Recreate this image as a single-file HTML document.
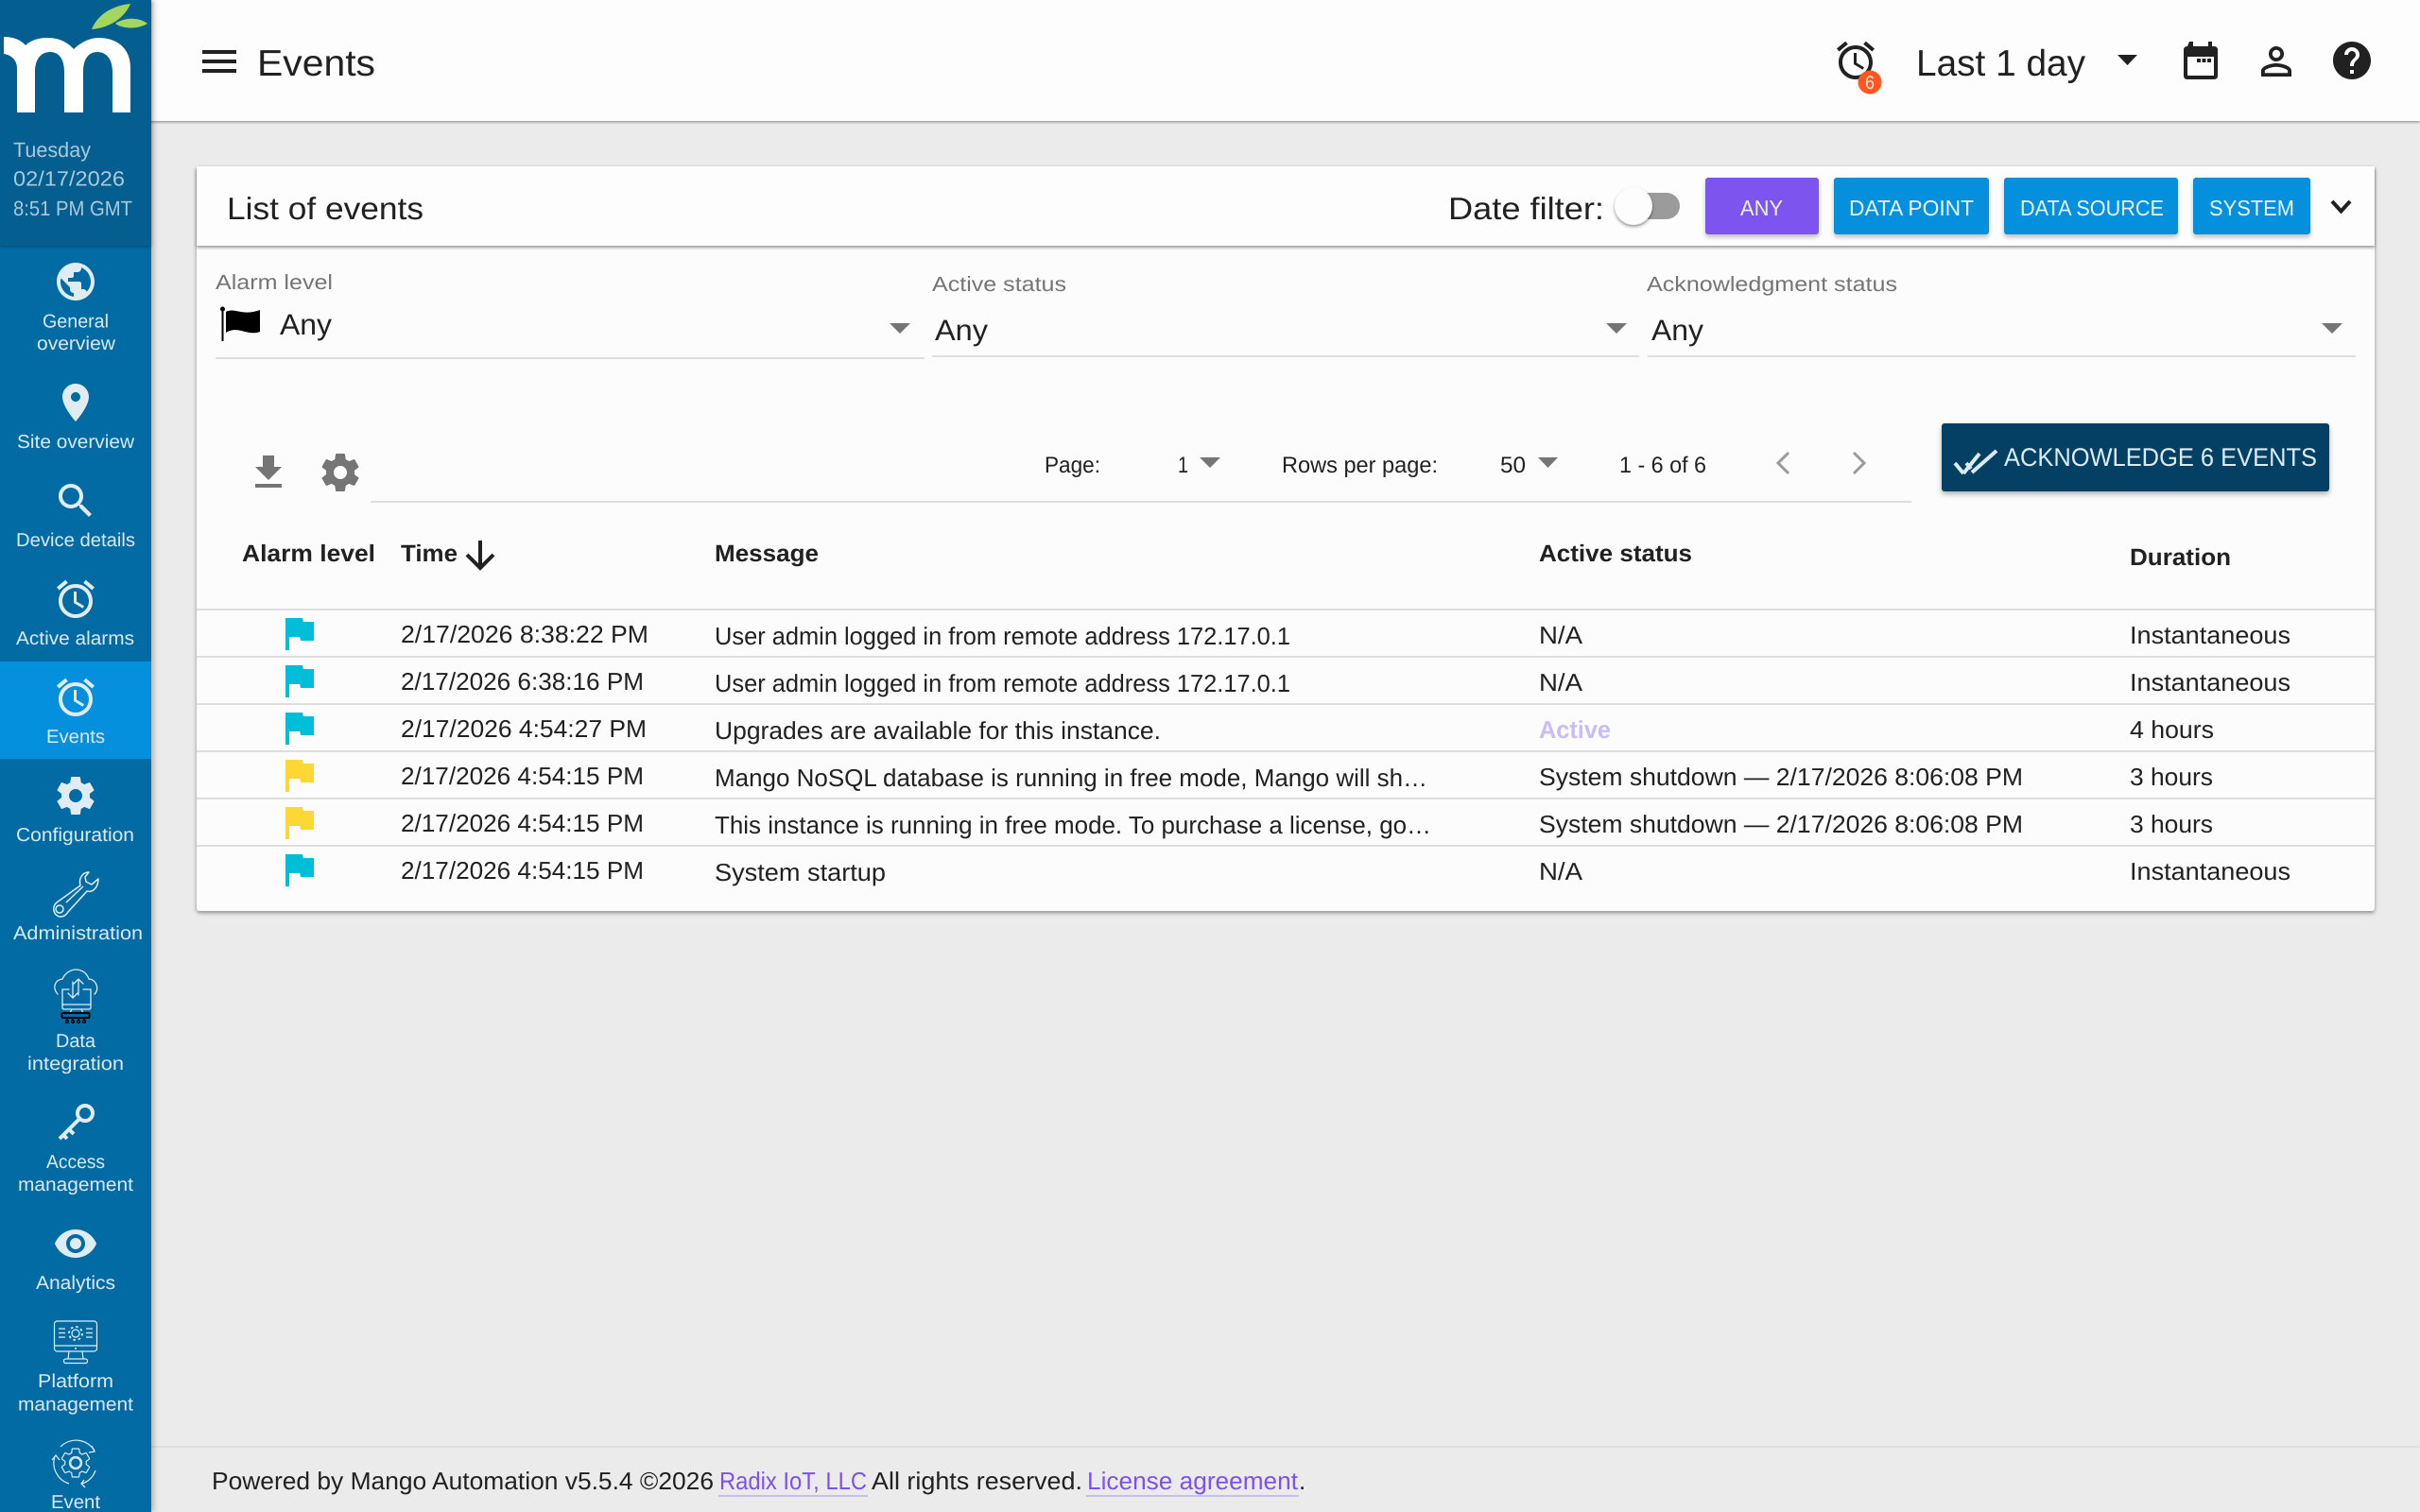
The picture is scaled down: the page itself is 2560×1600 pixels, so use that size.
<!DOCTYPE html>
<html><head><meta charset="utf-8"><title>Events</title>
<style>
html,body{margin:0;padding:0;width:2560px;height:1600px;overflow:hidden;background:#ebebeb;font-family:"Liberation Sans",sans-serif}
.a{position:absolute;box-sizing:border-box}
svg{position:absolute;left:0;top:0}
text{font-family:"Liberation Sans",sans-serif;fill:#212121;text-rendering:geometricPrecision}
.n{fill:#d9e8f2;font-size:20px}
.d{fill:#a9c9dc;font-size:22px}
.r{font-size:26px}
.b{font-size:25px;font-weight:bold}
.p{font-size:24px}
.l{font-size:22px;fill:#757575}
.w{font-size:23px;fill:#e8f4fb}
.i{fill:#e0ecf4}
.o{fill:none;stroke:#e0ecf4}
</style></head><body>
<div class="a" style="left:0;top:0;width:2560px;height:128px;background:#fdfdfd;box-shadow:0 1px 3px rgba(0,0,0,.45)"></div>
<div class="a" style="left:0;top:1530px;width:2560px;height:2px;background:#dedede"></div>
<div class="a" style="left:208px;top:176px;width:2304px;height:788px;background:#fcfcfc;border-radius:3px;box-shadow:0 2px 4px rgba(0,0,0,.4)"></div>
<div class="a" style="left:208px;top:176px;width:2304px;height:84px;background:#fdfdfd;box-shadow:0 2px 3px rgba(0,0,0,.4)"></div>
<div class="a" style="left:1804px;top:188px;width:120px;height:60px;background:#7d54ed;border-radius:3px;box-shadow:0 3px 5px rgba(0,0,0,.25)"></div>
<div class="a" style="left:1940px;top:188px;width:164px;height:60px;background:#0590dd;border-radius:3px;box-shadow:0 3px 5px rgba(0,0,0,.25)"></div>
<div class="a" style="left:2120px;top:188px;width:184px;height:60px;background:#0590dd;border-radius:3px;box-shadow:0 3px 5px rgba(0,0,0,.25)"></div>
<div class="a" style="left:2320px;top:188px;width:124px;height:60px;background:#0590dd;border-radius:3px;box-shadow:0 3px 5px rgba(0,0,0,.25)"></div>
<div class="a" style="left:2054px;top:448px;width:410px;height:72px;background:#034064;border-radius:3px;box-shadow:0 3px 6px rgba(0,0,0,.3)"></div>
<div class="a" style="left:1720px;top:204px;width:57px;height:28px;background:#9b9b9b;border-radius:14px"></div>
<div class="a" style="left:1708px;top:198px;width:40px;height:40px;background:#fdfdfd;border-radius:50%;box-shadow:0 2px 3px rgba(0,0,0,.4)"></div>
<div class="a" style="left:0;top:0;width:160px;height:1600px;background:#036ba3;box-shadow:3px 0 5px rgba(0,0,0,.22)"></div>
<div class="a" style="left:0;top:0;width:160px;height:260px;background:#045e90;box-shadow:0 1px 3px rgba(0,0,0,.3)"></div>
<div class="a" style="left:0;top:700px;width:160px;height:103px;background:#0590dd"></div>

<svg width="2560" height="1600" viewBox="0 0 2560 1600" xmlns="http://www.w3.org/2000/svg">
<defs>
<path id="alarm" d="M22 5.72l-4.6-3.86-1.29 1.53 4.6 3.86L22 5.72zM7.88 3.39L6.6 1.86 2 5.71l1.29 1.53 4.59-3.85zM12.5 8H11v6l4.75 2.85.75-1.23-4-2.37V8zM12 4c-4.97 0-9 4.03-9 9s4.03 9 9 9 9-4.03 9-9-4.03-9-9-9zm0 16c-3.87 0-7-3.13-7-7s3.13-7 7-7 7 3.13 7 7-3.13 7-7 7z"/>
<path id="gear" d="M19.43 12.98c.04-.32.07-.64.07-.98s-.03-.66-.07-.98l2.11-1.65c.19-.15.24-.42.12-.64l-2-3.46c-.12-.22-.39-.3-.61-.22l-2.49 1c-.52-.4-1.08-.73-1.69-.98l-.38-2.65C14.46 2.18 14.25 2 14 2h-4c-.25 0-.46.18-.49.42l-.38 2.65c-.61.25-1.17.59-1.69.98l-2.49-1c-.23-.09-.49 0-.61.22l-2 3.46c-.13.22-.07.49.12.64l2.11 1.65c-.04.32-.07.65-.07.98s.03.66.07.98l-2.11 1.65c-.19.15-.24.42-.12.64l2 3.46c.12.22.39.3.61.22l2.49-1c.52.4 1.08.73 1.69.98l.38 2.65c.03.24.24.42.49.42h4c.25 0 .46-.18.49-.42l.38-2.65c.61-.25 1.17-.59 1.69-.98l2.49 1c.23.09.49 0 .61-.22l2-3.46c.12-.22.07-.49-.12-.64l-2.11-1.65zM12 15.5c-1.93 0-3.5-1.57-3.5-3.5s1.57-3.5 3.5-3.5 3.5 1.57 3.5 3.5-1.57 3.5-3.5 3.5z"/>
<path id="flag" d="M14.4 6L14 4H5v17h2v-7h5.6l.4 2h7V6z"/>
</defs>

<!-- logo -->
<path fill="#fff" d="M4 39C14 39 22 42 27 48C33 42 42 40 50 40C60 40 70 43 78 52C86 44 96 40 104 40C125 40 138 52 138 72L138 119L119 119L119 76C119 62 112 55 103 55C94 55 88 62 88 76L88 119L68 119L68 76C68 62 62 55 53 55C44 55 37 62 37 76L37 119L18 119L18 72C18 64 12 58 4 57Z"/>
<path fill="#a4d65e" d="M97 31C103 16 118 6 138 4C132 18 118 29 97 31Z"/>
<path fill="#a4d65e" d="M122 25C130 19 146 17 156 25C146 31 130 31 122 25Z"/>

<text class="d" x="14" y="166" textLength="82" lengthAdjust="spacingAndGlyphs">Tuesday</text>
<text class="d" x="14" y="196.500" textLength="118" lengthAdjust="spacingAndGlyphs">02/17/2026</text>
<text class="d" x="14" y="228" textLength="126" lengthAdjust="spacingAndGlyphs">8:51 PM GMT</text>

<!-- nav icons -->
<path class="i" transform="translate(56 274) scale(2)" d="M12 2C6.48 2 2 6.48 2 12s4.48 10 10 10 10-4.48 10-10S17.52 2 12 2zm-1 17.93c-3.95-.49-7-3.85-7-7.93 0-.62.08-1.21.21-1.79L9 15v1c0 1.1.9 2 2 2v1.93zm6.9-2.54c-.26-.81-1-1.39-1.9-1.39h-1v-3c0-.55-.45-1-1-1H8v-2h2c.55 0 1-.45 1-1V7h2c1.1 0 2-.9 2-2v-.41c2.93 1.19 5 4.06 5 7.41 0 2.08-.8 3.97-2.1 5.39z"/>
<path class="i" transform="translate(56 402) scale(2)" d="M12 2C8.13 2 5 5.13 5 9c0 5.25 7 13 7 13s7-7.75 7-13c0-3.87-3.13-7-7-7zm0 9.5c-1.38 0-2.5-1.12-2.5-2.5s1.12-2.5 2.5-2.5 2.5 1.12 2.5 2.5-1.12 2.5-2.5 2.5z"/>
<path class="i" transform="translate(56 506) scale(2)" d="M15.5 14h-.79l-.28-.27C15.41 12.59 16 11.11 16 9.5 16 5.91 13.09 3 9.5 3S3 5.91 3 9.5 5.91 16 9.5 16c1.61 0 3.09-.59 4.23-1.57l.27.28v.79l5 4.99L20.49 19l-4.99-5zm-6 0C7.01 14 5 11.99 5 9.5S7.01 5 9.5 5 14 7.01 14 9.5 11.99 14 9.5 14z"/>
<use href="#alarm" class="i" transform="translate(56 610) scale(2)"/>
<use href="#alarm" class="i" transform="translate(56 714) scale(2)"/>
<use href="#gear" class="i" transform="translate(56 818) scale(2)"/>

<!-- wrench -->
<g class="o" stroke-width="1.500" stroke-linejoin="round">
<path d="M94 923C87 923 83 930 85 937L60 955C54 960 57 970 64 970C68 970 70 968 72 965L92 943C99 945 104 938 104 930L97 936L91 933L90 928Z"/>
<circle cx="63" cy="962" r="4"/>
<path d="M70 955L88 938"/>
</g>
<!-- data integration -->
<g class="o" stroke-width="1.300" stroke-linecap="round">
<path d="M61 1052C55 1045 58 1037 66 1036C69 1029 76 1026 80 1026C87 1026 92 1030 94 1036C101 1036 106 1046 100 1052"/>
<path d="M73 1047H66V1066Q66 1068 68 1068H94Q96 1068 96 1066V1047H88"/>
<path d="M66 1063H96M76 1068L74 1072M86 1068L88 1072"/>
<path d="M77 1039V1056M72 1051L77 1056L82 1051M83 1053V1036M78 1041L83 1036L88 1041"/>
</g>
<g fill="none" stroke="#000" stroke-width="1.300">
<rect x="65.500" y="1072" width="29" height="5" rx="1" stroke-width="2"/>
<circle cx="71" cy="1081" r="1.500"/><circle cx="77" cy="1081" r="1.500"/><circle cx="83" cy="1081" r="1.500"/><circle cx="89" cy="1081" r="1.500"/>
<path d="M71 1077V1079M77 1077V1079M83 1077V1079M89 1077V1079"/>
</g>
<!-- key -->
<g class="o">
<circle cx="90" cy="1178" r="8" stroke-width="4"/>
<path d="M84 1184L63 1205" stroke-width="4"/>
<path d="M73 1195L78 1200M67 1201L71 1205" stroke-width="4"/>
</g>
<!-- eye -->
<path class="i" transform="translate(56 1292) scale(2)" d="M12 4.5C7 4.5 2.73 7.61 1 12c1.73 4.39 6 7.5 11 7.5s9.27-3.11 11-7.5c-1.73-4.39-6-7.5-11-7.5zM12 17c-2.76 0-5-2.24-5-5s2.24-5 5-5 5 2.24 5 5-2.24 5-5 5zm0-8c-1.66 0-3 1.34-3 3s1.34 3 3 3 3-1.34 3-3-1.34-3-3-3z"/>
<!-- platform -->
<g class="o" stroke-width="1.200">
<rect x="57.500" y="1398" width="45" height="32" rx="3"/>
<path d="M58 1424H102M73 1430L72 1438M87 1430L88 1438"/>
<rect x="67.500" y="1438" width="25" height="4.500" rx="2"/>
<path d="M62 1406H69M62 1410.500H69M62 1415H69M91 1406H98M91 1410.500H98M91 1415H98"/>
<circle cx="80" cy="1411" r="4"/>
<circle cx="80" cy="1411" r="7" stroke-width="1.800" stroke-dasharray="2.500 3"/>
</g>
<circle class="i" cx="80" cy="1427" r="1"/>
<!-- event -->
<g class="o" stroke-width="1.200">
<path d="M64 1531A23 23 0 0 1 100 1535M101 1556A23 23 0 0 1 87 1570M73 1570A23 23 0 0 1 58 1541"/>
<path d="M97 1530L100 1536L94 1537M89 1566L86 1570L90 1574M55 1545L59 1540L63 1545" stroke-width="1.300"/>
<circle cx="80" cy="1548" r="6.500" stroke-width="1.300"/>
<use href="#gear" fill="none" stroke-width=".8" transform="translate(62 1530) scale(1.500)"/>
</g>

<!-- nav text -->
<g text-anchor="start">
<text class="n" x="45" y="346.500" textLength="70" lengthAdjust="spacingAndGlyphs">General</text>
<text class="n" x="39" y="370" textLength="83" lengthAdjust="spacingAndGlyphs">overview</text>
<text class="n" x="18" y="474" textLength="124" lengthAdjust="spacingAndGlyphs">Site overview</text>
<text class="n" x="17" y="578" textLength="126" lengthAdjust="spacingAndGlyphs">Device details</text>
<text class="n" x="17" y="682" textLength="125" lengthAdjust="spacingAndGlyphs">Active alarms</text>
<text class="n" x="49" y="786" textLength="62" lengthAdjust="spacingAndGlyphs">Events</text>
<text class="n" x="17" y="890" textLength="125" lengthAdjust="spacingAndGlyphs">Configuration</text>
<text class="n" x="14" y="994" textLength="137" lengthAdjust="spacingAndGlyphs">Administration</text>
<text class="n" x="59" y="1108" textLength="42" lengthAdjust="spacingAndGlyphs">Data</text>
<text class="n" x="29" y="1132" textLength="102" lengthAdjust="spacingAndGlyphs">integration</text>
<text class="n" x="49" y="1236" textLength="62" lengthAdjust="spacingAndGlyphs">Access</text>
<text class="n" x="19" y="1260" textLength="122" lengthAdjust="spacingAndGlyphs">management</text>
<text class="n" x="38" y="1364" textLength="84" lengthAdjust="spacingAndGlyphs">Analytics</text>
<text class="n" x="40" y="1468" textLength="80" lengthAdjust="spacingAndGlyphs">Platform</text>
<text class="n" x="19" y="1492.500" textLength="122" lengthAdjust="spacingAndGlyphs">management</text>
<text class="n" x="54" y="1596" textLength="52" lengthAdjust="spacingAndGlyphs">Event</text>
</g>

<!-- header -->
<path fill="#212121" d="M214 53h36v4h-36zM214 63h36v4h-36zM214 73h36v4h-36z"/>
<text x="272" y="80" font-size="39" textLength="125" lengthAdjust="spacingAndGlyphs">Events</text>
<use href="#alarm" fill="#212121" transform="translate(1939 40) scale(2)"/>
<circle cx="1978" cy="87" r="12.500" fill="#ff5722"/>
<text x="1973" y="94" font-size="20" textLength="10" lengthAdjust="spacingAndGlyphs" style="fill:#ffe0d4">6</text>
<text x="2027" y="80" font-size="39" textLength="179" lengthAdjust="spacingAndGlyphs">Last 1 day</text>
<path fill="#212121" d="M2240 58h21l-10.500 11z"/>
<path fill="#212121" fill-rule="evenodd" d="M2316 44h4v5h16v-5h4v5h2q4 0 4 4v27q0 4-4 4h-28q-4 0-4-4V53q0-4 4-4zM2314 60v20h28V60z"/>
<path fill="#212121" d="M2324 62h4v4h-4zM2329.500 62h4v4h-4zM2335 62h4v4h-4z"/>
<path fill="#212121" transform="translate(2384 41) scale(2)" d="M12 5.900c1.160 0 2.100.94 2.100 2.100s-.94 2.100-2.100 2.100S9.900 9.160 9.900 8s.94-2.100 2.100-2.100m0 9c2.970 0 6.100 1.460 6.100 2.100v1.100H5.900V17c0-.64 3.130-2.100 6.100-2.100M12 4C9.790 4 8 5.790 8 8s1.790 4 4 4 4-1.790 4-4-1.790-4-4-4zm0 9c-2.670 0-8 1.340-8 4v3h16v-3c0-2.660-5.330-4-8-4z"/>
<path fill="#212121" transform="translate(2464 40) scale(2)" d="M12 2C6.480 2 2 6.480 2 12s4.480 10 10 10 10-4.480 10-10S17.520 2 12 2zm1 17h-2v-2h2v2zm2.070-7.750l-.9.920C13.450 12.900 13 13.500 13 15h-2v-.5c0-1.100.45-2.100 1.170-2.830l1.240-1.260c.37-.36.59-.86.59-1.410 0-1.100-.9-2-2-2s-2 .9-2 2H8c0-2.210 1.790-4 4-4s4 1.790 4 4c0 .88-.36 1.680-.93 2.250z"/>

<!-- card header -->
<text x="240" y="232" font-size="33" textLength="208" lengthAdjust="spacingAndGlyphs">List of events</text>
<text x="1532" y="232" font-size="33" textLength="165" lengthAdjust="spacingAndGlyphs">Date filter:</text>
<text class="w" x="1841" y="228" textLength="45" lengthAdjust="spacingAndGlyphs">ANY</text>
<text class="w" x="1956" y="228" textLength="132" lengthAdjust="spacingAndGlyphs">DATA POINT</text>
<text class="w" x="2137" y="228" textLength="152" lengthAdjust="spacingAndGlyphs">DATA SOURCE</text>
<text class="w" x="2337" y="228" textLength="90" lengthAdjust="spacingAndGlyphs">SYSTEM</text>
<path d="M2467 213L2476.500 223.500L2486 213" fill="none" stroke="#212121" stroke-width="4"/>

<!-- filters -->
<text class="l" x="228" y="306" textLength="124" lengthAdjust="spacingAndGlyphs">Alarm level</text>
<text class="l" x="986" y="308" textLength="142" lengthAdjust="spacingAndGlyphs">Active status</text>
<text class="l" x="1742" y="308" textLength="265" lengthAdjust="spacingAndGlyphs">Acknowledgment status</text>
<rect x="234.500" y="328" width="2" height="33" fill="#000"/>
<circle cx="235.500" cy="327" r="2.500" fill="#000"/>
<path fill="#000" d="M239 330C248 325 256 335 275 328V351C262 356 252 344 239 352Z"/>
<text x="296" y="354" font-size="31" textLength="55" lengthAdjust="spacingAndGlyphs">Any</text>
<text x="989" y="360" font-size="31" textLength="56" lengthAdjust="spacingAndGlyphs">Any</text>
<text x="1747" y="360" font-size="31" textLength="55" lengthAdjust="spacingAndGlyphs">Any</text>
<g fill="#757575">
<path d="M941 342h22l-11 11z"/>
<path d="M1699 342h22l-11 11z"/>
<path d="M2456 342h22l-11 11z"/>
</g>
<g fill="#dedede">
<rect x="228" y="378" width="750" height="2"/>
<rect x="986" y="376" width="748" height="2"/>
<rect x="1743" y="376" width="749" height="2"/>
<rect x="392" y="530" width="1630" height="2"/>
</g>

<!-- toolbar -->
<path fill="#757575" transform="translate(260 476) scale(2)" d="M19 9h-4V3H9v6H5l7 7 7-7zM5 18v2h14v-2H5z"/>
<use href="#gear" fill="#757575" transform="translate(336 476) scale(2)"/>
<text class="p" x="1105" y="500" textLength="59" lengthAdjust="spacingAndGlyphs">Page:</text>
<text class="p" x="1246" y="500" textLength="11" lengthAdjust="spacingAndGlyphs">1</text>
<text class="p" x="1356" y="500" textLength="165" lengthAdjust="spacingAndGlyphs">Rows per page:</text>
<text class="p" x="1587" y="500" textLength="27" lengthAdjust="spacingAndGlyphs">50</text>
<text class="p" x="1713" y="500" textLength="92" lengthAdjust="spacingAndGlyphs">1 - 6 of 6</text>
<path fill="#757575" d="M1269 484h22l-11 11zM1627 484h21l-10.500 11z"/>
<path d="M1892 479L1881 490L1892 501M1961 479L1972 490L1961 501" fill="none" stroke="#9a9a9a" stroke-width="3"/>
<path d="M2068 490L2077 501M2077 501L2094 480M2080 490L2085 496M2086 500L2112 477" fill="none" stroke="#dcebf3" stroke-width="4"/>
<text x="2120" y="493" font-size="27" textLength="331" lengthAdjust="spacingAndGlyphs" style="fill:#dcebf3">ACKNOWLEDGE 6 EVENTS</text>

<!-- table head -->
<text class="b" x="256" y="594" textLength="141" lengthAdjust="spacingAndGlyphs">Alarm level</text>
<text class="b" x="424" y="594" textLength="60" lengthAdjust="spacingAndGlyphs">Time</text>
<path d="M508 572V601M494 587L508 601L522 587" fill="none" stroke="#212121" stroke-width="4"/>
<text class="b" x="756" y="594" textLength="110" lengthAdjust="spacingAndGlyphs">Message</text>
<text class="b" x="1628" y="594" textLength="162" lengthAdjust="spacingAndGlyphs">Active status</text>
<text class="b" x="2253" y="598" textLength="107" lengthAdjust="spacingAndGlyphs">Duration</text>

<g fill="#dedede">
<rect x="208" y="644" width="2304" height="2"/>
<rect x="208" y="694" width="2304" height="2"/>
<rect x="208" y="744" width="2304" height="2"/>
<rect x="208" y="794" width="2304" height="2"/>
<rect x="208" y="844" width="2304" height="2"/>
<rect x="208" y="894" width="2304" height="2"/>
</g>

<!-- flags -->
<use href="#flag" fill="#00bed8" transform="translate(292 646) scale(2)"/>
<use href="#flag" fill="#00bed8" transform="translate(292 696) scale(2)"/>
<use href="#flag" fill="#00bed8" transform="translate(292 746) scale(2)"/>
<use href="#flag" fill="#fdd835" transform="translate(292 796) scale(2)"/>
<use href="#flag" fill="#fdd835" transform="translate(292 846) scale(2)"/>
<use href="#flag" fill="#00bed8" transform="translate(292 896) scale(2)"/>

<!-- rows -->
<text class="r" x="424" y="680" textLength="262" lengthAdjust="spacingAndGlyphs">2/17/2026 8:38:22 PM</text>
<text class="r" x="424" y="730" textLength="257" lengthAdjust="spacingAndGlyphs">2/17/2026 6:38:16 PM</text>
<text class="r" x="424" y="780" textLength="260" lengthAdjust="spacingAndGlyphs">2/17/2026 4:54:27 PM</text>
<text class="r" x="424" y="830" textLength="257" lengthAdjust="spacingAndGlyphs">2/17/2026 4:54:15 PM</text>
<text class="r" x="424" y="880" textLength="257" lengthAdjust="spacingAndGlyphs">2/17/2026 4:54:15 PM</text>
<text class="r" x="424" y="930" textLength="257" lengthAdjust="spacingAndGlyphs">2/17/2026 4:54:15 PM</text>

<text class="r" x="756" y="682" textLength="609" lengthAdjust="spacingAndGlyphs">User admin logged in from remote address 172.17.0.1</text>
<text class="r" x="756" y="732" textLength="609" lengthAdjust="spacingAndGlyphs">User admin logged in from remote address 172.17.0.1</text>
<text class="r" x="756" y="782" textLength="472" lengthAdjust="spacingAndGlyphs">Upgrades are available for this instance.</text>
<text class="r" x="756" y="832" textLength="754" lengthAdjust="spacingAndGlyphs">Mango NoSQL database is running in free mode, Mango will sh…</text>
<text class="r" x="756" y="882" textLength="758" lengthAdjust="spacingAndGlyphs">This instance is running in free mode. To purchase a license, go…</text>
<text class="r" x="756" y="932" textLength="181" lengthAdjust="spacingAndGlyphs">System startup</text>

<text class="r" x="1628" y="681" textLength="46" lengthAdjust="spacingAndGlyphs">N/A</text>
<text class="r" x="1628" y="731" textLength="46" lengthAdjust="spacingAndGlyphs">N/A</text>
<text class="r" x="1628" y="781" font-weight="bold" textLength="76" lengthAdjust="spacingAndGlyphs" style="fill:#cbbcf6">Active</text>
<text class="r" x="1628" y="831" textLength="512" lengthAdjust="spacingAndGlyphs">System shutdown — 2/17/2026 8:06:08 PM</text>
<text class="r" x="1628" y="881" textLength="512" lengthAdjust="spacingAndGlyphs">System shutdown — 2/17/2026 8:06:08 PM</text>
<text class="r" x="1628" y="931" textLength="46" lengthAdjust="spacingAndGlyphs">N/A</text>

<text class="r" x="2253" y="681" textLength="170" lengthAdjust="spacingAndGlyphs">Instantaneous</text>
<text class="r" x="2253" y="731" textLength="170" lengthAdjust="spacingAndGlyphs">Instantaneous</text>
<text class="r" x="2253" y="781" textLength="89" lengthAdjust="spacingAndGlyphs">4 hours</text>
<text class="r" x="2253" y="831" textLength="88" lengthAdjust="spacingAndGlyphs">3 hours</text>
<text class="r" x="2253" y="881" textLength="88" lengthAdjust="spacingAndGlyphs">3 hours</text>
<text class="r" x="2253" y="931" textLength="170" lengthAdjust="spacingAndGlyphs">Instantaneous</text>

<!-- footer -->
<text class="r" x="224" y="1576" textLength="531" lengthAdjust="spacingAndGlyphs">Powered by Mango Automation v5.5.4 ©2026</text>
<text class="r" x="761" y="1576" textLength="156" lengthAdjust="spacingAndGlyphs" style="fill:#7c52ed">Radix IoT, LLC</text>
<text class="r" x="922" y="1576" textLength="223" lengthAdjust="spacingAndGlyphs">All rights reserved.</text>
<text class="r" x="1150" y="1576" textLength="223" lengthAdjust="spacingAndGlyphs" style="fill:#7c52ed">License agreement</text>
<text class="r" x="1374" y="1576">.</text>
<rect x="760" y="1582" width="158" height="2" fill="#c9bcf0"/>
<rect x="1149" y="1582" width="225" height="2" fill="#c9bcf0"/>
</svg>
</body></html>
